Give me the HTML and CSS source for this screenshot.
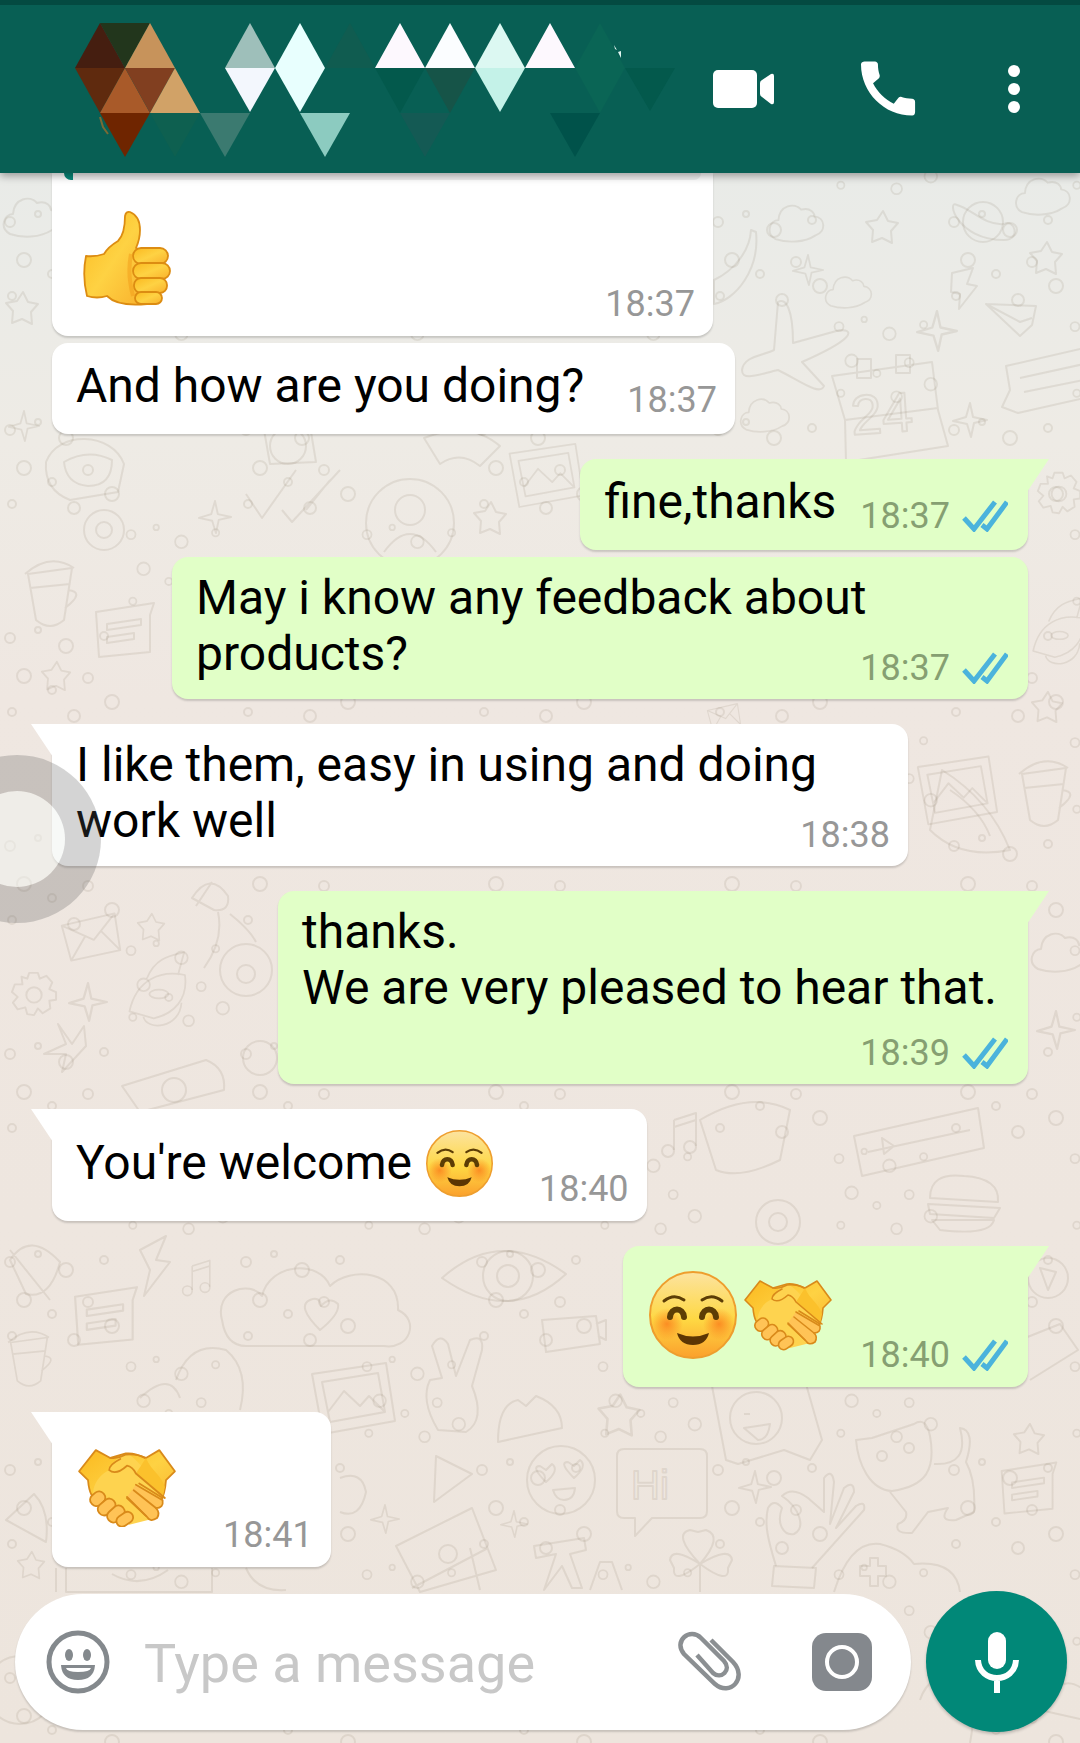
FILE: index.html
```
<!DOCTYPE html>
<html lang="en">
<head>
  <meta charset="UTF-8">
  <meta name="viewport" content="width=device-width, initial-scale=1.0">
  <title>Chat</title>
  <link rel="stylesheet" href="styles.css">
</head>
<body>
  <!-- Shared drawings -->
  <svg class="defs" aria-hidden="true">
    <defs>
      <linearGradient id="faceFill" x1="0" y1="0" x2="0" y2="1">
        <stop offset="0" stop-color="#fce3a0"/>
        <stop offset=".55" stop-color="#fed843"/>
        <stop offset="1" stop-color="#fba02c"/>
      </linearGradient>
      <radialGradient id="cheek">
        <stop offset="0" stop-color="#fb7d1c" stop-opacity=".8"/>
        <stop offset="1" stop-color="#fb7d1c" stop-opacity="0"/>
      </radialGradient>
      <linearGradient id="handFill" x1="0" y1="0" x2="1" y2="1">
        <stop offset="0" stop-color="#fbb91f"/>
        <stop offset=".5" stop-color="#fed243"/>
        <stop offset="1" stop-color="#f9b02c"/>
      </linearGradient>
    </defs>
    <symbol id="smile" viewBox="0 0 88 88">
      <circle cx="44" cy="44" r="43" fill="url(#faceFill)" stroke="#ee9e2e" stroke-width="2"/>
      <circle cx="18" cy="53" r="16" fill="url(#cheek)"/>
      <circle cx="70" cy="53" r="16" fill="url(#cheek)"/>
      <g fill="none" stroke="#5c3d05" stroke-linecap="round">
        <path d="M15 30Q25 22 35 29M53 29Q63 22 73 30" stroke-width="3"/>
        <path d="M21 46C22 36 34 36 35 46M53 46C54 36 66 36 67 46" stroke-width="6"/>
      </g>
      <path d="M28 62Q44 69 60 62Q57 74 44 74Q31 74 28 62Z" fill="#5c3503"/>
    </symbol>
    <symbol id="shake" viewBox="0 0 88 70">
      <g stroke="#d98a1a" stroke-width="1.6" stroke-linejoin="round" stroke-linecap="round">
        <path d="M16 1 1 20 9 28C10 40 13 44 18 48L38 62L56 62C74 56 78 42 79 28L87 20 73 1 61 8Q50 3 43 4L29 8Z" fill="url(#handFill)"/>
        <path d="M28 19C32 10 38 5 45 5C53 9 58 17 65 25L75 42 70 62 46 68 14 46C12 38 15 25 28 19Z" fill="#fed34f" stroke="none"/>
        <path d="M61 8C66 20 74 22 78 34L76 44 52 22Z" fill="#fbc12c" stroke="none"/>
        <g fill="#ffc356">
          <rect x="11" y="39" width="14" height="11" rx="5" transform="rotate(-40 18 45)"/>
          <rect x="17" y="47" width="17" height="11" rx="5" transform="rotate(-40 25 52)"/>
          <rect x="26" y="53" width="17" height="11" rx="5" transform="rotate(-42 34 59)"/>
          <rect x="34" y="58" width="16" height="10" rx="5" transform="rotate(-34 42 63)"/>
          <path d="M44 43 62 61Q65 66 71 62Q74 57 70 53Q77 53 76 46L52 32"/>
          <path d="M50 37 70 53M44 44 61 60M55 31 76 44" fill="none"/>
        </g>
        <path d="M29 8Q36 9 43 5Q53 4 60 8" fill="none"/>
        <path d="M38 9C32 12 28 15 28 19Q34 24 44 15Q49 16 52 22L78 44" fill="none"/>
      </g>
    </symbol>
    <symbol id="thumb" viewBox="0 0 88 96">
      <g fill="url(#handFill)" stroke="#dc8c12" stroke-width="1.8" stroke-linejoin="round">
        <path d="M3 46Q12 47 21 44Q25 37 35 31Q42 24 42 6Q43 1 47 2Q57 6 57 20Q57 29 53 38L62 42 64 94Q35 97 24 86Q14 89 4 86Q-1 66 3 46Z"/>
        <rect x="50" y="38" width="35" height="16" rx="8"/>
        <rect x="50" y="53" width="37" height="16" rx="8"/>
        <rect x="51" y="68" width="33" height="15" rx="7"/>
        <rect x="52" y="82" width="27" height="12" rx="6"/>
      </g>
      <path d="M48 44Q44 64 50 86" fill="none" stroke="#f29b18" stroke-width="4" opacity=".5"/>
    </symbol>
    <symbol id="ticks" viewBox="0 0 46 32">
      <path d="M2 18 12 29 33 2M20 25 25 29 45 2" fill="none" stroke="#4bb3dc" stroke-width="5"/>
    </symbol>
    <symbol id="cloud" viewBox="0 0 60 42"><path d="M8 38C-3 32 2 18 11 18C12 2 28-1 35 7C45 4 49 11 49 14C60 15 62 30 50 34C38 42 20 42 8 38Z"/></symbol>
    <symbol id="star" viewBox="0 0 36 36"><path d="M19 2 24 12 34 14 27 22 28 34 18 29 8 33 9 21 2 13 13 11Z"/></symbol>
    <symbol id="spark" viewBox="0 0 36 36"><path d="M18 1 21 15 35 18 22 21 19 35 15 22 1 19 14 15Z"/></symbol>
    <symbol id="bubbles" viewBox="0 0 120 100"><circle cx="10" cy="14" r="5"/><circle cx="38" cy="6" r="3"/><circle cx="66" cy="22" r="7"/><circle cx="104" cy="12" r="4"/><circle cx="24" cy="52" r="7"/><circle cx="52" cy="66" r="4"/><circle cx="88" cy="54" r="5"/><circle cx="112" cy="78" r="7"/><circle cx="12" cy="88" r="4"/><circle cx="74" cy="92" r="6"/></symbol>
    <symbol id="note" viewBox="0 0 70 60"><path d="M6 12 64 3 60 15V52L9 57ZM17 24 51 19V25L17 30ZM17 37 44 33V39L17 43Z"/></symbol>
    <symbol id="mail" viewBox="0 0 70 56"><path d="M4 16 60 3 66 42 14 53ZM4 16 38 31 60 3M14 53 29 27M66 42 46 22"/></symbol>
    <symbol id="gear" viewBox="0 0 50 50"><path d="M20 3H29L31 9 38 6 44 13 41 20 48 23V31L41 32 42 40 34 45 29 40 25 47 18 46 16 39 8 41 3 34 8 28 2 23 5 15 13 15 12 7 18 9Z"/><circle cx="25" cy="26" r="8"/></symbol>
    <symbol id="rocket" viewBox="0 0 90 90"><path d="M4 72C12 35 40 24 68 30C72 58 55 75 32 80ZM24 34C34 10 50 8 67 4L60 30M20 78C24 95 62 92 64 62"/><ellipse cx="38" cy="52" rx="11" ry="5"/></symbol>
    <symbol id="photo" viewBox="0 0 90 76"><path d="M4 14 78 3 87 61 15 74ZM14 22 70 13 77 52 22 62ZM20 52 36 31 52 46 61 36 76 51"/></symbol>
    <symbol id="cup" viewBox="0 0 60 70"><path d="M8 14 52 8 44 60Q30 72 16 60ZM5 14Q30-8 54 8M10 28 50 24M48 30Q66 32 45 48"/></symbol>
    <symbol id="music" viewBox="0 0 40 50"><path d="M14 10 36 3V36M14 10V40M14 17 36 10"/><circle cx="8" cy="41" r="6"/><circle cx="30" cy="37" r="6"/></symbol>
  </svg>

  <!-- Wallpaper -->
  <svg class="wallpaper" aria-hidden="true">
    <defs>
      <pattern id="dots" width="236" height="208" patternUnits="userSpaceOnUse">
        <use href="#bubbles" width="120" height="100"/>
        <use href="#bubbles" x="122" y="106" width="108" height="90"/>
      </pattern>
    </defs>
    <rect class="fleck" width="100%" height="100%"/>
    <g class="doodle">
      <use href="#cloud" x="768" y="203" width="57" height="40"/>
      <use href="#cloud" x="820" y="275" width="57" height="34"/>
      <use href="#cloud" x="1014" y="176" width="58" height="40"/>
      <use href="#cloud" x="738" y="397" width="54" height="36"/>
      <use href="#cloud" x="2" y="195" width="60" height="44"/>
      <use href="#star" x="864" y="209" width="36" height="36"/>
      <use href="#star" x="1028" y="240" width="36" height="36"/>
      <use href="#star" x="4" y="290" width="36" height="36"/>
      <use href="#spark" x="792" y="254" width="32" height="32"/>
      <use href="#spark" x="916" y="310" width="42" height="42"/>
      <use href="#spark" x="952" y="402" width="36" height="36"/>
      <use href="#spark" x="8" y="410" width="32" height="32"/>
      <circle cx="983" cy="222" r="20"/>
      <path d="M957 205C946 198 956 240 1004 240C1022 240 1014 218 1004 224C985 226 970 208 957 205Z"/>
      <path d="M952 273 973 268 967 284 977 286 959 309 960 294 951 292Z"/>
      <path d="M986 304 1036 306 1032 325 1020 336 986 304 1020 322 1032 318"/>
      <path d="M756 232C760 270 735 300 714 304V280C735 270 750 250 751 230Z"/>
      <path d="M778 302C786 297 793 310 793 343L840 330C856 330 852 340 802 362L824 386C820 396 802 382 778 370C760 374 742 382 742 370C744 356 762 356 774 350Z"/>
      <path d="M832 376 932 362 938 410 948 446 846 462 845 420ZM845 420 938 408M857 359H871V378H857ZM896 355H910V373H896Z"/>
      <text x="852" y="435" font-size="56" transform="rotate(-4 852 435)">24</text>
      <path d="M1006 366 1084 348V398L1018 413 1002 407 1010 390ZM1020 378 1084 364M1024 392 1084 380"/>
      <!-- 440 - 720 -->
      <path d="M46 462C58 430 112 432 124 464L118 492 70 500Q44 490 46 462ZM64 462Q88 448 112 460Q112 486 88 486Q66 484 64 462Z"/>
      <circle cx="104" cy="530" r="20"/><circle cx="104" cy="530" r="8"/>
      <path d="M246 494 262 518 296 470M282 510 292 522 340 470M330 480 306 510"/>
      <circle cx="410" cy="523" r="44"/><circle cx="410" cy="510" r="15"/><path d="M384 552Q410 516 436 552"/>
      <circle cx="288" cy="446" r="18"/><path d="M264 430 310 426 316 462 270 464Z"/>
      <path d="M424 438Q470 420 500 446L480 466Q460 450 440 464Z"/>
      <use href="#star" x="472" y="500" width="36" height="36"/>
      <use href="#photo" x="506" y="440" width="80" height="70"/>
      <use href="#spark" x="198" y="500" width="34" height="34"/>
      <use href="#cup" x="20" y="560" width="60" height="70"/>
      <use href="#note" x="90" y="600" width="70" height="60"/>
      <use href="#star" x="40" y="660" width="32" height="32"/>
      <use href="#rocket" x="1030" y="590" width="70" height="80"/>
      <use href="#gear" x="1036" y="470" width="46" height="46"/>
      <use href="#mail" x="694" y="702" width="60" height="30"/>
      <!-- 720 - 1100 -->
      <use href="#photo" x="914" y="750" width="86" height="80"/>
      <use href="#cup" x="1014" y="760" width="60" height="70"/>
      <use href="#star" x="1030" y="690" width="34" height="34"/>
      <path d="M942 770Q990 800 1010 850Q960 860 930 830ZM950 790Q980 810 990 836"/>
      <use href="#mail" x="58" y="908" width="66" height="58"/>
      <use href="#star" x="136" y="912" width="30" height="30"/>
      <use href="#gear" x="10" y="970" width="48" height="48"/>
      <use href="#spark" x="68" y="982" width="40" height="40"/>
      <use href="#rocket" x="126" y="944" width="78" height="88"/>
      <path d="M192 898Q210 870 228 896Q230 912 214 910ZM196 906 212 882M218 912Q224 940 204 968M230 914Q250 930 256 942"/>
      <circle cx="246" cy="970" r="26"/><circle cx="246" cy="974" r="9"/>
      <path d="M58 1024 72 1044 84 1026 86 1046 62 1072 66 1054 44 1054 66 1044Z"/>
      <path d="M122 1086 206 1060Q226 1068 224 1090L140 1112Z"/><circle cx="174" cy="1090" r="12"/>
      <circle cx="260" cy="1058" r="17"/>
      <use href="#spark" x="1036" y="1010" width="40" height="40"/>
      <use href="#cloud" x="1030" y="930" width="60" height="44"/>
      <!-- 1090 - 1400 -->
      <use href="#music" x="660" y="1110" width="40" height="50"/>
      <path d="M700 1120Q750 1090 790 1110L780 1160Q740 1180 716 1170Z"/>
      <path d="M854 1136 978 1108 984 1148 862 1176ZM868 1152 970 1130M882 1138 894 1146 884 1154Z"/>
      <path d="M930 1198Q930 1172 964 1176Q1000 1178 998 1202ZM928 1204 1000 1208 994 1218 930 1214ZM932 1220H994Q990 1236 940 1230Z"/>
      <circle cx="778" cy="1222" r="22"/><circle cx="778" cy="1222" r="9"/>
      <circle cx="1048" cy="1278" r="20"/><path d="M1040 1268 1056 1272 1048 1290ZM1020 1340 1060 1324 1078 1350 1030 1380"/>
      <path d="M10 1260Q30 1230 60 1262Q50 1300 26 1294ZM10 1250 50 1300M140 1250 166 1236 156 1260 170 1262 144 1296 150 1270Z"/>
      <use href="#note" x="68" y="1284" width="76" height="64"/>
      <use href="#music" x="180" y="1258" width="34" height="40"/>
      <use href="#cup" x="4" y="1320" width="50" height="80"/>
      <path d="M222 1320C214 1290 250 1280 262 1296C270 1262 320 1260 330 1286C350 1266 400 1270 398 1310C420 1320 410 1350 384 1346H246Q226 1346 222 1320ZM320 1330Q296 1306 310 1300 320 1296 321 1306 330 1296 338 1304 340 1314 320 1330Z"/>
      <path d="M442 1278Q500 1226 566 1274Q510 1326 442 1278Z"/><circle cx="508" cy="1276" r="25"/><circle cx="508" cy="1276" r="11"/>
      <path d="M176 1380Q190 1340 226 1350Q250 1370 240 1410M140 1398Q170 1370 180 1398"/>
      <use href="#photo" x="300" y="1360" width="106" height="76"/>
      <path d="M438 1430Q420 1400 430 1380L442 1378 432 1346Q440 1332 448 1344L456 1376 470 1340Q484 1334 482 1350L472 1386Q486 1420 466 1432Z"/>
      <path d="M542 1320 596 1316 600 1344 546 1352ZM596 1324 606 1320V1340L598 1336"/>
      <use href="#star" x="596" y="1392" width="46" height="46"/>
      <path d="M498 1442Q498 1404 518 1400L526 1406 536 1396Q562 1406 562 1428Z"/>
      <!-- 1400 - 1743 -->
      <path d="M436 1456 472 1474 434 1502Z"/>
      <circle cx="561" cy="1480" r="34"/>
      <path d="M546 1482Q530 1466 540 1466L546 1470 552 1464Q560 1470 546 1482ZM574 1478Q558 1462 568 1462L574 1466 580 1460Q588 1466 574 1478ZM553 1490 575 1488Q574 1500 564 1500Q556 1500 553 1490Z"/>
      <path d="M624 1449H700Q707 1449 707 1456V1511Q707 1518 700 1518H652L635 1536V1518H624Q617 1518 617 1511V1456Q617 1449 624 1449Z"/>
      <text x="631" y="1499" font-size="40">Hi</text>
      <path d="M712 1386 806 1384 822 1440 810 1460 784 1450 738 1464 726 1460Z"/>
      <circle cx="756" cy="1418" r="26"/><path d="M744 1428 770 1424Q768 1440 758 1440ZM744 1414H750"/>
      <path d="M856 1440 872 1438 914 1424Q926 1416 930 1436C936 1470 926 1486 892 1491C870 1490 858 1464 856 1440ZM890 1492 906 1512Q908 1520 898 1524 894 1534 912 1533L928 1512 948 1508Q938 1522 956 1520L974 1512Q976 1480 966 1462Q976 1430 960 1428Q970 1466 934 1464"/>
      <circle cx="882" cy="1456" r="5"/><circle cx="909" cy="1448" r="5"/>
      <use href="#note" x="996" y="1458" width="66" height="60"/>
      <use href="#star" x="1012" y="1422" width="34" height="34"/>
      <use href="#spark" x="738" y="1470" width="34" height="34"/>
      <path d="M776 1566C768 1540 764 1524 768 1508Q774 1498 782 1508C776 1524 784 1536 794 1534C806 1528 800 1508 782 1496Q792 1486 808 1498L824 1512 824 1478Q832 1468 834 1482L830 1524 844 1488Q854 1480 854 1492L836 1528 856 1506Q866 1500 864 1510L812 1568"/>
      <path d="M774 1566 816 1568 814 1588 772 1586Z"/>
      <path d="M834 1592Q850 1540 880 1544 904 1550 914 1564 956 1560 960 1592"/>
      <path d="M870 1558H878V1566H886V1576H878V1586H870V1576H860V1566H870Z"/>
      <path d="M700 1564Q672 1534 690 1530L698 1532 706 1530Q724 1536 700 1564Q730 1546 732 1560L728 1568Q730 1586 700 1564ZM700 1564Q672 1546 670 1560L674 1568Q672 1586 700 1564V1592"/>
      <path d="M396 1546 472 1508 496 1570 420 1592ZM412 1588 488 1548M470 1548 480 1590"/><circle cx="448" cy="1554" r="9"/>
      <path d="M534 1546 584 1538 586 1550 570 1554 582 1588H572L562 1566 544 1590 556 1554 536 1558ZM590 1590 600 1562H612L622 1590"/>
      <path d="M6 1520 34 1494Q50 1510 46 1542ZM340 1478Q362 1470 366 1492 360 1520 340 1512"/>
      <use href="#spark" x="370" y="1504" width="30" height="30"/>
      <use href="#star" x="16" y="1550" width="30" height="30"/>
      <use href="#spark" x="500" y="1510" width="28" height="28"/>
      <path d="M56 1568V1592M66 1568V1592H212V1568M112 1574Q140 1590 168 1570M246 1568Q256 1592 286 1590"/>
      <circle cx="20" cy="1690" r="34"/>
      <path d="M920 1700Q930 1670 960 1680 980 1690 970 1743M1040 1710Q1060 1670 1084 1690V1720Z"/>
    </g>
  </svg>

  <header class="topbar">
    <svg class="contact" viewBox="0 0 680 168" role="img" aria-label="Contact">
      <path fill="#22361c" d="M100 18H150L125 63Z"/>
      <path fill="#451e10" d="M100 18 125 63H75Z"/>
      <path fill="#5f2a0e" d="M75 63H125L100 108Z"/>
      <path fill="#c7935b" d="M150 18 175 63H125Z"/>
      <path fill="#a95a29" d="M125 63 150 108H100Z"/>
      <path fill="#813f20" d="M125 63H175L150 108Z"/>
      <path fill="#d1a267" d="M175 63 200 108H150Z"/>
      <path fill="#6f2500" d="M100 108H150L125 152Z"/>
      <path fill="none" stroke="#7a6a35" stroke-width="2" d="M100 112 103 122 108 129"/>
      <path fill="#0e6050" d="M150 108H200L175 152Z"/>
      <path fill="#3b7a70" d="M200 108H250L225 152Z"/>
      <path fill="#9ebfba" d="M250 18 275 63H225Z"/>
      <path fill="#f3f7fd" d="M225 63H275L250 107Z"/>
      <path fill="#e8fffe" d="M300 18 325 63 300 107 275 63Z"/>
      <path fill="#8ccbc0" d="M300 108H350L325 152Z"/>
      <path fill="#105c50" d="M350 18 375 63H325Z"/>
      <path fill="#165448" d="M425 63H475L450 108Z"/>
      <path fill="#fdf8fe" d="M400 18 425 63H375ZM550 18 575 63H525Z"/>
      <path fill="#fbfdff" d="M450 18 475 63H425Z"/>
      <path fill="#dcf8f2" d="M500 18 525 63H475Z"/>
      <path fill="#c4f2e8" d="M475 63H525L500 107Z"/>
      <path fill="#03594c" d="M375 63H425L400 108ZM625 63H675L650 106Z"/>
      <path fill="#145a54" d="M400 108H450L425 152Z"/>
      <path fill="#0a6555" d="M600 18 625 63 600 108 575 63Z"/>
      <path fill="#00524a" d="M550 108H600L575 152Z"/>
      <path fill="#e0f5ef" d="M614 40 617 45 615 44ZM618 47 621 46V53Z"/>
    </svg>
    <button type="button" aria-label="Video call">
      <svg width="64" height="64" viewBox="0 0 64 64" fill="#fff"><rect x="3" y="13" width="44" height="38" rx="5"/><path d="M50 26Q50 24 52 23L61 17Q64 16 64 19V45Q64 48 61 47L52 40Q50 39 50 37Z"/></svg>
    </button>
    <button type="button" aria-label="Voice call">
      <svg width="64" height="64" viewBox="2 1.5 21.3 21.3" fill="#fff"><path d="M20.01 15.38c-1.23 0-2.42-.2-3.53-.56-.35-.12-.74-.03-1.01.24l-1.57 1.97c-2.83-1.35-5.48-3.9-6.89-6.83l1.95-1.66c.27-.28.35-.67.24-1.02-.37-1.11-.56-2.3-.56-3.53 0-.54-.45-.99-.99-.99H4.19C3.65 3 3 3.24 3 3.99 3 13.28 10.73 21 20.01 21c.71 0 .99-.63.99-1.18v-3.45c0-.54-.45-.99-.99-.99z"/></svg>
    </button>
    <button type="button" aria-label="More options">
      <svg width="16" height="64" viewBox="0 0 16 64" fill="#fff"><circle cx="8" cy="14" r="6"/><circle cx="8" cy="32" r="6"/><circle cx="8" cy="50" r="6"/></svg>
    </button>
  </header>

  <main class="chat">
    <article class="bubble in quoted">
      <div class="quote"></div>
      <div class="emoji-row">
        <svg class="thumb" role="img" aria-label="Thumbs up"><use href="#thumb"/></svg>
        <span class="meta"><time>18:37</time></span>
      </div>
    </article>

    <article class="bubble in">
      And how are you doing?
      <span class="meta"><time>18:37</time></span>
    </article>

    <article class="bubble out tail">
      fine,thanks
      <span class="meta"><time>18:37</time><svg class="ticks"><use href="#ticks"/></svg></span>
    </article>

    <article class="bubble out multi">
      May i know any feedback about products?
      <span class="meta"><time>18:37</time><svg class="ticks"><use href="#ticks"/></svg></span>
    </article>

    <article class="bubble in tail multi">
      I like them, easy in using and doing work well
      <span class="meta"><time>18:38</time></span>
    </article>

    <article class="bubble out tail multi below">
      <p>thanks.<br>We are very pleased to hear that.</p>
      <span class="meta"><time>18:39</time><svg class="ticks"><use href="#ticks"/></svg></span>
    </article>

    <article class="bubble in tail emoji-row">
      <p class="with-face">You're welcome <svg class="face-small" role="img" aria-label="Smiling face"><use href="#smile"/></svg></p>
      <span class="meta"><time>18:40</time></span>
    </article>

    <article class="bubble out tail emoji-row pair">
      <svg class="face" role="img" aria-label="Smiling face"><use href="#smile"/></svg>
      <svg class="face" role="img" aria-label="Handshake"><use href="#shake"/></svg>
      <span class="meta"><time>18:40</time><svg class="ticks"><use href="#ticks"/></svg></span>
    </article>

    <article class="bubble in tail emoji-row single">
      <svg class="shake" role="img" aria-label="Handshake"><use href="#shake"/></svg>
      <span class="meta"><time>18:41</time></span>
    </article>
  </main>

  <form class="composer">
    <div class="field">
      <button type="button" aria-label="Emoji">
        <svg width="64" height="64" viewBox="0 0 64 64"><circle cx="32" cy="32" r="29" fill="none" stroke="#84898d" stroke-width="5"/><g fill="#84898d"><ellipse cx="23" cy="25" rx="4" ry="6"/><ellipse cx="41" cy="25" rx="4" ry="6"/><path d="M15 35H49Q48 50 32 50Q16 50 15 35Z"/></g><path d="M20 38H45Q44 42 32 42Q21 42 20 38Z" fill="#fff"/></svg>
      </button>
      <input type="text" aria-label="Message" placeholder="Type a message">
      <button type="button" aria-label="Attach">
        <svg width="64" height="64" viewBox="0 0 64 64" fill="none" stroke="#8b8f92" stroke-width="4.5"><path d="M33 10 55 32C70 48 52 67 37 54L6 24C-5 11 12-3 23 8L46 31C54 40 43 50 35 43L19 25"/></svg>
      </button>
      <button type="button" class="camera" aria-label="Camera">
        <svg width="60" height="60" viewBox="0 0 60 60"><rect y="1" width="60" height="58" rx="14" fill="#84888d"/><circle cx="30" cy="30" r="15" fill="none" stroke="#fff" stroke-width="4"/></svg>
      </button>
    </div>
    <button type="button" class="mic" aria-label="Record voice message">
      <svg width="64" height="64" viewBox="0 0 64 64"><rect x="23" y="2" width="18" height="37" rx="9" fill="#fff"/><path d="M13 30C14 54 50 54 51 30M32 47V63" fill="none" stroke="#fff" stroke-width="6"/></svg>
    </button>
  </form>

  <div class="assist"></div>
</body>
</html>
```
FILE: styles.css
```
* {
  box-sizing: border-box;
}
body {
  position: relative;
  display: flex;
  flex-direction: column;
  min-height: 100vh;
  margin: 0;
  overflow-x: hidden;
  font-family: Roboto, sans-serif;
  font-size: 48px;
  line-height: 56px;
  color: #000;
  background: linear-gradient(#e9ebe8 170px, #eeebe5 440px, #efe7e1 700px, #ede5dd);
}
p {
  margin: 0;
}
button {
  display: flex;
  padding: 0;
  border: none;
  background: none;
  cursor: pointer;
}
svg {
  display: block;
  flex: none;
}
.defs {
  position: absolute;
  width: 0;
  height: 0;
}
.wallpaper {
  position: absolute;
  inset: 0;
  width: 100%;
  height: 100%;
  z-index: -1;
}
.doodle,
.wallpaper pattern {
  fill: none;
  stroke: rgba(120, 105, 85, 0.13);
  stroke-width: 2;
  stroke-linejoin: round;
}
.fleck {
  fill: url(#dots);
}
.doodle text {
  font-family: "Liberation Sans", sans-serif;
}

/* Top bar */
.topbar {
  position: relative;
  z-index: 1;
  display: flex;
  align-items: center;
  gap: 84px;
  height: 173px;
  padding-right: 58px;
  border-top: 5px solid #044a41;
  background: #085f54;
  box-shadow: 0 3px 8px rgba(0, 0, 0, 0.35);
}
.contact {
  width: 680px;
  height: 168px;
  margin-right: auto;
}
.topbar button:nth-of-type(1) {
  margin-left: -84px;
}

/* Messages */
.chat {
  flex: 1;
  display: flex;
  flex-direction: column;
  align-items: flex-start;
  padding: 0 52px 24px;
}
.bubble {
  position: relative;
  display: flow-root;
  max-width: 856px;
  margin-top: 7px;
  padding: 15px 18px 14px 24px;
  border-radius: 16px;
  background: #fff;
  box-shadow: 0 2px 2px rgba(0, 0, 0, 0.16);
}
.out {
  align-self: flex-end;
  padding-right: 20px;
  background: #e1ffc7;
}
.multi {
  padding-top: 13px;
  padding-bottom: 11px;
}
.tail {
  margin-top: 25px;
}
.tail::before {
  content: "";
  position: absolute;
  top: 0;
  width: 22px;
  height: 33px;
}
.in.tail {
  border-top-left-radius: 0;
}
.in.tail::before {
  left: -21px;
  background: #fff;
  clip-path: polygon(0 0, 100% 0, 100% 100%);
}
.out.tail {
  border-top-right-radius: 0;
}
.out.tail::before {
  right: -21px;
  background: #e1ffc7;
  clip-path: polygon(0 0, 100% 0, 0 100%);
}
.meta {
  float: right;
  display: flex;
  align-items: center;
  gap: 12px;
  margin: 22px 0 0 43px;
  font-size: 36px;
  line-height: 40px;
  color: #979797;
}
.out .meta {
  margin-left: 24px;
  color: #869f72;
}
.ticks {
  width: 46px;
  height: 32px;
}
.quoted {
  width: 661px;
  margin-top: 0;
  padding: 0 18px 12px 12px;
  border-radius: 0 0 16px 16px;
}
.quote {
  height: 7px;
  margin-right: -6px;
  border-left: 9px solid #07897a;
  border-radius: 0 0 8px 8px;
  background: #f0f0f0;
}
.below {
  display: flex;
  flex-direction: column;
  align-items: flex-end;
}
.below p {
  margin-right: 11px;
}
.below .meta {
  margin-top: 17px;
}
.emoji-row {
  display: flex;
  align-items: flex-end;
  padding-bottom: 12px;
}
.emoji-row .meta {
  margin-left: auto;
}
.quoted .emoji-row {
  padding: 30px 0 0 19px;
}
.thumb {
  width: 88px;
  height: 96px;
  margin-bottom: 18px;
}
.with-face {
  display: flex;
  align-items: center;
  gap: 14px;
  height: 70px;
  margin: 4px 46px 11px 0;
}
.face-small {
  width: 67px;
  height: 67px;
}
.pair,
.single {
  padding-top: 25px;
}
.pair {
  padding-left: 26px;
}
.face {
  width: 88px;
  height: 88px;
  margin: 0 7px 16px 0;
}
.pair .meta {
  margin-left: 21px;
}
.shake {
  width: 98px;
  height: 78px;
  margin: 12px 47px 28px 2px;
}

/* Composer */
.composer {
  display: flex;
  align-items: center;
  gap: 15px;
  padding: 0 13px 11px 15px;
}
.field {
  flex: 1;
  display: flex;
  align-items: center;
  min-width: 0;
  height: 136px;
  padding: 0 39px 0 31px;
  border-radius: 68px;
  background: #fff;
  box-shadow: 0 2px 2px rgba(0, 0, 0, 0.16);
}
.field input {
  flex: 1;
  min-width: 0;
  height: 80px;
  margin-left: 34px;
  padding: 4px 0 0;
  border: none;
  outline: none;
  background: none;
  font: inherit;
  font-size: 54px;
  line-height: 72px;
}
.field input::placeholder {
  color: #c8c8c8;
  opacity: 1;
}
.camera {
  margin-left: 70px;
}
.mic {
  flex: none;
  align-items: center;
  justify-content: center;
  width: 141px;
  height: 141px;
  border-radius: 50%;
  background: #018878;
  box-shadow: 0 2px 3px rgba(0, 0, 0, 0.2);
}

/* Floating assistive button at the screen edge */
.assist {
  position: absolute;
  top: 755px;
  left: -67px;
  width: 168px;
  height: 168px;
  border: 36px solid rgba(90, 90, 90, 0.26);
  border-radius: 50%;
  background: rgba(240, 244, 240, 0.5);
  background-clip: padding-box;
}
```
